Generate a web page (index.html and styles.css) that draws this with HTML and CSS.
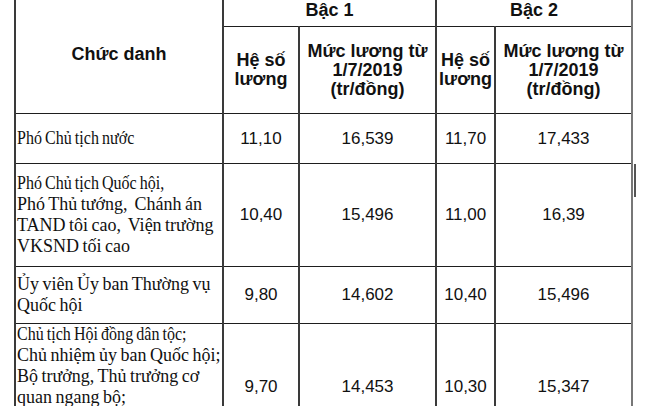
FILE: index.html
```html
<!DOCTYPE html>
<html lang="vi">
<head>
<meta charset="utf-8">
<title>Bảng lương</title>
<link rel="stylesheet" href="styles.css">
</head>
<body>
<table class="salary">
  <colgroup>
    <col class="c-title">
    <col class="c-coef">
    <col class="c-pay">
    <col class="c-coef2">
    <col class="c-pay">
  </colgroup>
  <thead>
    <tr class="h1">
      <th rowspan="2" class="title-head">Chức danh</th>
      <th colspan="2">Bậc 1</th>
      <th colspan="2" class="last">Bậc 2</th>
    </tr>
    <tr class="h2">
      <th>Hệ số<br>lương</th>
      <th>Mức lương từ<br>1/7/2019<br>(tr/đồng)</th>
      <th>Hệ số<br>lương</th>
      <th class="last">Mức lương từ<br>1/7/2019<br>(tr/đồng)</th>
    </tr>
  </thead>
  <tbody>
    <tr class="r1">
      <td class="name"><span class="tight">Phó Chủ tịch nước</span></td>
      <td>11,10</td>
      <td>16,539</td>
      <td>11,70</td>
      <td class="last">17,433</td>
    </tr>
    <tr class="r2">
      <td class="name"><span class="tight">Phó Chủ tịch Quốc hội,</span><br>Phó Thủ tướng,&nbsp; Chánh án<br>TAND tôi cao,&nbsp; Viện trường<br>VKSND tối cao</td>
      <td>10,40</td>
      <td>15,496</td>
      <td>11,00</td>
      <td class="last marked">16,39</td>
    </tr>
    <tr class="r3">
      <td class="name">Ủy viên Ủy ban Thường vụ<br>Quốc hội</td>
      <td>9,80</td>
      <td>14,602</td>
      <td>10,40</td>
      <td class="last">15,496</td>
    </tr>
    <tr class="r4">
      <td class="name"><span class="tight">Chủ tịch Hội đồng dân tộc;</span><br>Chủ nhiệm ủy ban Quốc hội;<br>Bộ trưởng, Thủ trưởng cơ<br>quan ngang bộ;<br>Bí thư Thành ủy Hà Nội,<br>Bí thư Thành ủy TP.HCM</td>
      <td>9,70</td>
      <td>14,453</td>
      <td>10,30</td>
      <td class="last">15,347</td>
    </tr>
  </tbody>
</table>
</body>
</html>
```

FILE: styles.css
```css
html, body {
  margin: 0;
  padding: 0;
  background: #ffffff;
  overflow: hidden;
}

body {
  padding: 0 0 0 14px;
}

.salary {
  margin-top: -6px;
  border-collapse: collapse;
  table-layout: fixed;
  width: 617px;
  color: #111;
}

.c-title { width: 208px; }
.c-coef { width: 76px; }
.c-pay { width: 137px; }
.c-coef2 { width: 59px; }

.salary th,
.salary td {
  border-top: 1px solid #1e1e1e;
  border-bottom: 1px solid #1e1e1e;
  border-left: 2px solid #3a3a3a;
  border-right: 2px solid #3a3a3a;
  padding: 0;
  text-align: center;
  vertical-align: middle;
  white-space: nowrap;
}

.salary .last {
  border-right: 2px solid #777;
}

.salary th {
  font-family: "Liberation Sans", Arial, sans-serif;
  font-weight: bold;
  font-size: 18px;
  line-height: 19px;
}

.h1 th { height: 31px; }
.h2 th { height: 86px; line-height: 19px; }

.salary td {
  font-family: "Liberation Sans", Arial, sans-serif;
  font-size: 17px;
}

.salary td.name {
  font-family: "Liberation Serif", "Times New Roman", serif;
  font-size: 18px;
  line-height: 21px;
  text-align: left;
  padding-left: 1px;
  word-spacing: -1px;
}

.tight {
  display: inline-block;
  transform: scaleX(0.89);
  transform-origin: left center;
}

.r1 td { height: 49px; }
.r2 td { height: 102px; }
.r3 td { height: 56px; }

.marked {
  position: relative;
}

.marked::after {
  content: "";
  position: absolute;
  right: -5px;
  top: 0;
  width: 2px;
  height: 33px;
  background: #555;
}
```
